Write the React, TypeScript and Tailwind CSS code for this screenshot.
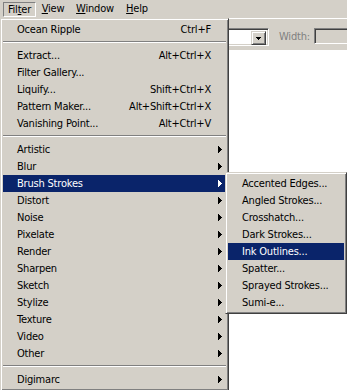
import React from "react";

type Item =
  | { kind: "item"; label: string; shortcut?: string; sub?: boolean; active?: boolean }
  | { kind: "sep" };

const mainItems: Item[] = [
  { kind: "item", label: "Ocean Ripple", shortcut: "Ctrl+F" },
  { kind: "sep" },
  { kind: "item", label: "Extract...", shortcut: "Alt+Ctrl+X" },
  { kind: "item", label: "Filter Gallery..." },
  { kind: "item", label: "Liquify...", shortcut: "Shift+Ctrl+X" },
  { kind: "item", label: "Pattern Maker...", shortcut: "Alt+Shift+Ctrl+X" },
  { kind: "item", label: "Vanishing Point...", shortcut: "Alt+Ctrl+V" },
  { kind: "sep" },
  { kind: "item", label: "Artistic", sub: true },
  { kind: "item", label: "Blur", sub: true },
  { kind: "item", label: "Brush Strokes", sub: true, active: true },
  { kind: "item", label: "Distort", sub: true },
  { kind: "item", label: "Noise", sub: true },
  { kind: "item", label: "Pixelate", sub: true },
  { kind: "item", label: "Render", sub: true },
  { kind: "item", label: "Sharpen", sub: true },
  { kind: "item", label: "Sketch", sub: true },
  { kind: "item", label: "Stylize", sub: true },
  { kind: "item", label: "Texture", sub: true },
  { kind: "item", label: "Video", sub: true },
  { kind: "item", label: "Other", sub: true },
  { kind: "sep" },
  { kind: "item", label: "Digimarc", sub: true },
];

const brushItems = [
  "Accented Edges...",
  "Angled Strokes...",
  "Crosshatch...",
  "Dark Strokes...",
  "Ink Outlines...",
  "Spatter...",
  "Sprayed Strokes...",
  "Sumi-e...",
];

const Arrow = ({ white }: { white?: boolean }) => (
  <svg width="4" height="7" viewBox="0 0 4 7" shapeRendering="crispEdges">
    <path
      d="M0 0h1v7H0z M1 1h1v5H1z M2 2h1v3H2z M3 3h1v1H3z"
      fill={white ? "#fff" : "#000"}
    />
  </svg>
);

const menuBox =
  "bg-[#d4d0c8] border border-t-[#d4d0c8] border-l-[#d4d0c8] border-r-[#404040] border-b-[#404040] shadow-[inset_1px_1px_0_#fff,inset_-1px_-1px_0_#808080] p-[2px]";

function MenuRow({ item }: { item: Extract<Item, { kind: "item" }> }) {
  return (
    <div
      className={`flex h-[17px] items-center leading-[17px] pl-[14px] ${
        item.active ? "bg-[#0a246a] text-white" : "text-black"
      } ${item.sub ? "pr-[4px]" : "pr-[15px]"}`}
    >
      <span className="flex-1 whitespace-nowrap">{item.label}</span>
      {item.shortcut && <span className="whitespace-nowrap">{item.shortcut}</span>}
      {item.sub && <Arrow white={item.active} />}
    </div>
  );
}

function Separator() {
  return (
    <div className="pt-[3px] pb-[4px]">
      <div className="h-[2px] border-t border-t-[#808080] border-b border-b-white" />
    </div>
  );
}

export default function App() {
  return (
    <div className="relative w-[347px] h-[390px] overflow-hidden bg-white text-[11px] tracking-[-0.2px] text-black font-[family-name:Tahoma,'DejaVu_Sans_Condensed','Liberation_Sans',sans-serif]">
      {/* menu bar */}
      <div className="flex h-[18px] bg-[#d4d0c8] pl-[3px] pt-[2px]">
        <div className="w-[33px] h-[15px] border border-t-[#808080] border-l-[#808080] border-r-white border-b-white flex items-center justify-center leading-[13px]">
          <span>
            Fil<span className="underline">t</span>er
          </span>
        </div>
        <div className="w-[34px] h-[15px] flex items-center justify-center">
          <span>
            <span className="underline">V</span>iew
          </span>
        </div>
        <div className="w-[50px] h-[15px] flex items-center justify-center">
          <span>
            <span className="underline">W</span>indow
          </span>
        </div>
        <div className="w-[34px] h-[15px] flex items-center justify-center">
          <span>
            <span className="underline">H</span>elp
          </span>
        </div>
      </div>

      {/* options bar */}
      <div className="flex h-[32px] items-start bg-[#d4d0c8] border-t border-white pl-[160px] pt-[9px]">
        <div className="flex shrink-0 w-[109px] h-[18px] justify-end bg-white border border-t-[#808080] border-l-[#808080] border-r-white border-b-white shadow-[inset_1px_1px_0_#404040,inset_-1px_-1px_0_#d4d0c8] p-[2px]">
          <div className="flex w-[15px] h-[14px] items-center justify-center bg-[#d4d0c8] border border-t-[#d4d0c8] border-l-[#d4d0c8] border-r-[#404040] border-b-[#404040] shadow-[inset_1px_1px_0_#fff,inset_-1px_-1px_0_#808080]">
            <svg width="5" height="3" viewBox="0 0 5 3" shapeRendering="crispEdges">
              <path d="M0 0h5v1H0z M1 1h3v1H1z M2 2h1v1H2z" fill="#000" />
            </svg>
          </div>
        </div>
        <span className="shrink-0 ml-[10px] leading-[18px] text-[#808080]">Width:</span>
        <div className="ml-[4px] w-[60px] h-[16px] shrink-0 bg-[#d4d0c8] border border-t-[#808080] border-l-[#808080] border-r-white border-b-white shadow-[inset_1px_1px_0_#404040]" />
      </div>

      {/* Filter menu */}
      <div className={`absolute left-0 top-[18px] w-[229px] ${menuBox}`}>
        {mainItems.map((it, i) =>
          it.kind === "sep" ? <Separator key={i} /> : <MenuRow key={i} item={it} />
        )}
      </div>

      {/* Brush Strokes submenu */}
      <div className={`absolute left-[225px] top-[172px] w-[122px] ${menuBox}`}>
        {brushItems.map((label) => (
          <MenuRow
            key={label}
            item={{ kind: "item", label, active: label === "Ink Outlines..." }}
          />
        ))}
      </div>
    </div>
  );
}
